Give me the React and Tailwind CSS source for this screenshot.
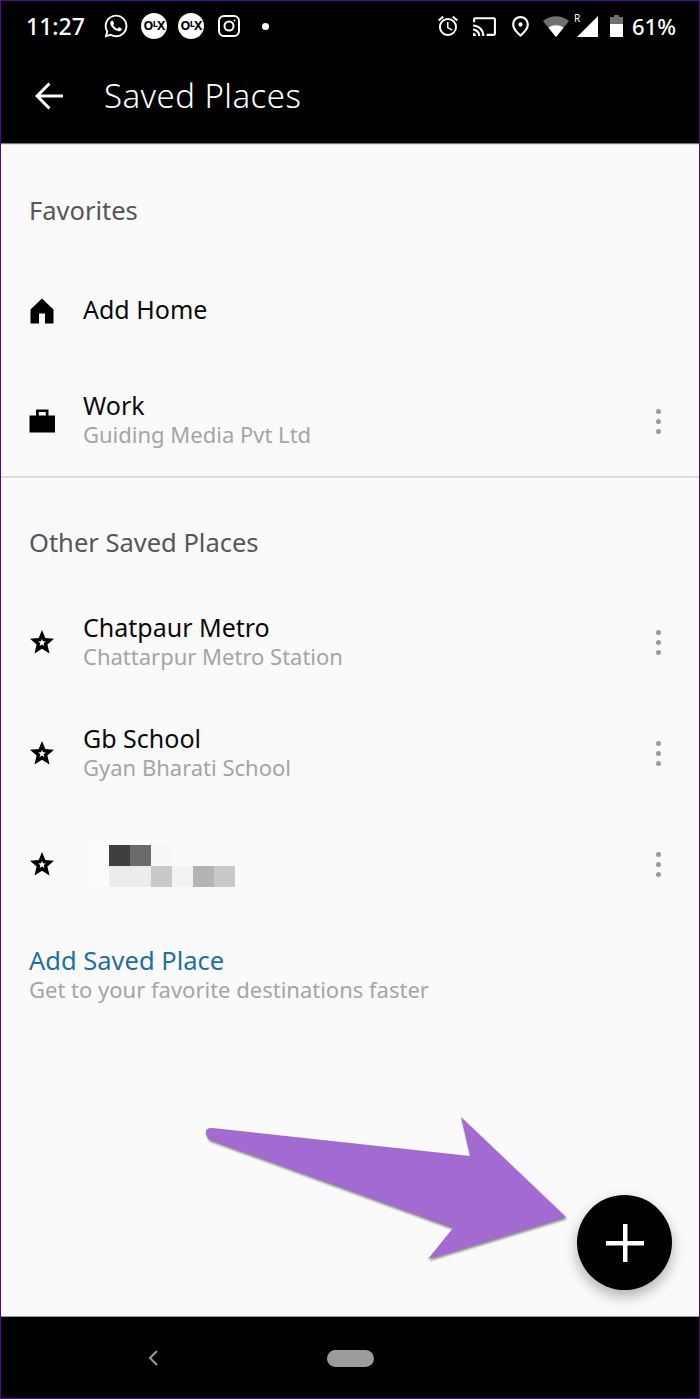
import React from "react";
import { FaWhatsapp } from "react-icons/fa";
import { MdAccessAlarm, MdCast, MdOutlinePlace } from "react-icons/md";

const Olx = ({ className }) => (
  <div className={"w-[26px] h-[26px] rounded-full bg-white flex items-center justify-center text-black text-[12.500px] font-bold leading-none tracking-[-0.8px] " + className}>
    O<span className="text-[9px] -mt-[5px]">L</span>X
  </div>
);

const Home = () => (
  <svg width="24" height="26" viewBox="0 0 24 26" className="block">
    <path fill="#000" fillRule="evenodd" d="M12 .5 23.500 11.500V25.500H15V15.500H9V25.500H.5V11.500Z" />
  </svg>
);

const Briefcase = () => (
  <svg width="26" height="24" viewBox="0 0 26 24" className="block">
    <path fill="#000" fillRule="evenodd" d="M7 .5h12.500v6H26V23.500H.5V6.500H7ZM9.800 3v3.500h7V3Z" />
  </svg>
);

const Star = () => (
  <svg width="24" height="24" viewBox="0 0 24 24" className="block -mt-[2px]">
    <path
      fill="#000"
      fillRule="evenodd"
      d="M12 0 15.300 8 24 8.800 17.400 14.500 19.500 23.500 12 18.800 4.500 23.500 6.600 14.500 0 8.800 8.700 8ZM12 8.800 11 11.300 8.200 11.500 10.300 13.300 9.700 16 12 14.600 14.300 16 13.700 13.300 15.800 11.500 13 11.300Z"
    />
  </svg>
);

const Dots = () => (
  <div className="flex flex-col gap-[5px] mr-[38px]">
    <div className="w-[5px] h-[5px] rounded-full bg-[#9a9a9f]" />
    <div className="w-[5px] h-[5px] rounded-full bg-[#9a9a9f]" />
    <div className="w-[5px] h-[5px] rounded-full bg-[#9a9a9f]" />
  </div>
);

const Row = ({ icon, title, sub, dots, children, height = "h-[111px]" }) => (
  <div className={height + " flex items-center pl-[28px]"}>
    <div className="w-[26px] flex justify-center shrink-0">{icon}</div>
    <div className="ml-[28px] flex-1 min-w-0">
      {children || (
        <div className="-mt-[3px]">
          <div className="text-[25px] leading-[28px] text-[#0a0a0a]">{title}</div>
          {sub && <div className="mt-[1px] text-[22px] leading-[28px] text-[#a4a4a9]">{sub}</div>}
        </div>
      )}
    </div>
    {dots && <Dots />}
  </div>
);

export default function App() {
  return (
    <div
      className="relative w-[700px] h-[1399px] flex flex-col overflow-hidden border border-[#4a0b8c] bg-[#fafafa]"
      style={{ fontFamily: '"Noto Sans", "Open Sans", sans-serif' }}
    >
      <header className="h-[143px] shrink-0 bg-black text-white border-b border-[#777]">
        <div className="h-[50px] flex items-center justify-between pl-[25px] pr-[24px]">
          <div className="flex items-center">
            <span className="text-[23px] font-medium leading-none w-[77px]">11:27</span>
            <FaWhatsapp size={26} className="mr-[12px]" />
            <Olx className="mr-[11px]" />
            <Olx className="mr-[14px]" />
            <svg width="22" height="22" viewBox="0 0 22 22" fill="none" stroke="#fff" strokeWidth="2" className="mr-[22px]">
              <rect x="1" y="1" width="20" height="20" rx="5" />
              <circle cx="11" cy="11" r="4.500" />
              <circle cx="16.500" cy="5.500" r="1" fill="#fff" stroke="none" />
            </svg>
            <div className="w-[7px] h-[7px] rounded-full bg-white" />
          </div>
          <div className="flex items-center">
            <MdAccessAlarm size={24} className="mr-[12px]" />
            <MdCast size={25} className="mr-[11px]" />
            <MdOutlinePlace size={25} className="mr-[10px]" />
            <svg width="26" height="21" viewBox="0 0 26 21" className="mr-[8px]">
              <path fill="#707070" d="M13 21 0 5C7-1.500 19-1.500 26 5Z" />
              <path fill="#fff" d="M13 21 5.500 11.700C9.500 8.500 16.500 8.500 20.500 11.700Z" />
            </svg>
            <div className="relative w-[21px] h-[21px] mr-[12px]">
              <svg width="21" height="21" viewBox="0 0 21 21" className="block">
                <path fill="#fff" d="M0 21 21 0V21Z" />
              </svg>
              <span className="absolute -left-[3px] -top-[3px] text-[10px] leading-none">R</span>
            </div>
            <svg width="13" height="22" viewBox="0 0 13 22" className="mr-[9px]">
              <path fill="#707070" d="M4 0H9V2H13V9H0V2H4Z" />
              <path fill="#fff" d="M0 9H13V22H0Z" />
            </svg>
            <span className="w-[43px] text-[22px] font-medium leading-none whitespace-nowrap">61%</span>
          </div>
        </div>
        <div className="h-[90px] flex items-center pl-[34px]">
          <svg width="28" height="28" viewBox="0 0 28 28" fill="none" stroke="#fff" strokeWidth="3" className="shrink-0">
            <path d="M28 14H2M14.500 1.500 2 14l12.500 12.500" />
          </svg>
          <span className="ml-[41px] -mt-[1px] text-[33px] font-light leading-none tracking-[0.45px]">Saved Places</span>
        </div>
      </header>

      <main className="flex-1 bg-[#fafafa] border-t border-[#e4e4e4]">
        <div className="h-[110px] pl-[28px] pt-[49px] text-[25.500px] leading-[32px] text-[#55555a]">Favorites</div>
        <Row icon={<Home />} title="Add Home" />
        <Row icon={<Briefcase />} title="Work" sub="Guiding Media Pvt Ltd" dots height="h-[110px]" />
        <div className="h-[2px] bg-[#dedede]" />
        <div className="h-[109px] pl-[28px] pt-[48px] text-[25.500px] leading-[32px] text-[#55555a]">Other Saved Places</div>
        <Row icon={<Star />} title="Chatpaur Metro" sub="Chattarpur Metro Station" dots />
        <Row icon={<Star />} title="Gb School" sub="Gyan Bharati School" dots />
        <Row icon={<Star />} dots>
          <div className="flex flex-col ml-[5px] mt-[2px]">
            <div className="flex">
              <div className="w-[21px] h-[21px] bg-[#fbfbfb]" />
              <div className="w-[21px] h-[21px] bg-[#3f3f3f]" />
              <div className="w-[21px] h-[21px] bg-[#6b6b6b]" />
              <div className="w-[21px] h-[21px] bg-[#f7f7f7]" />
            </div>
            <div className="flex">
              <div className="w-[21px] h-[21px] bg-[#fbfbfb]" />
              <div className="w-[42px] h-[21px] bg-[#ecebee]" />
              <div className="w-[21px] h-[21px] bg-[#c9c9c9]" />
              <div className="w-[21px] h-[21px] bg-[#f3f3f3]" />
              <div className="w-[21px] h-[21px] bg-[#b4b4b4]" />
              <div className="w-[21px] h-[21px] bg-[#c9c8cc]" />
            </div>
          </div>
        </Row>
        <div className="pl-[28px] pt-[26px]">
          <div className="text-[25.500px] leading-[29px] text-[#1f6f9f]">Add Saved Place</div>
          <div className="text-[22px] leading-[29px] text-[#a4a4a9]">Get to your favorite destinations faster</div>
        </div>
      </main>

      <nav className="h-[82px] shrink-0 bg-black border-t border-[#999] flex items-center relative">
        <svg width="12" height="18" viewBox="0 0 12 18" fill="none" stroke="#9a9a9a" strokeWidth="2" className="ml-[146px] mt-[1px]">
          <path d="M10 2 3 9l7 7" />
        </svg>
        <div className="ml-[168px] w-[47px] h-[17px] rounded-full bg-[#9b9b9b] mt-[1px]" />
      </nav>

      <svg width="380" height="150" viewBox="0 0 380 150" className="absolute left-[199px] top-[1111px] drop-shadow-[1px_2px_1px_rgba(0,0,0,0.45)]">
        <path
          fill="#a36bd1"
          d="M12 16C7 15.500 5 18 6 22 7 25 8 27 10 28L253 116 228 147 366 105 261 5 270 44Z"
        />
      </svg>

      <div className="absolute left-[576px] top-[1194px] w-[95px] h-[95px] rounded-full bg-black flex items-center justify-center shadow-[0_6px_14px_rgba(0,0,0,0.3)]">
        <svg width="38" height="38" viewBox="0 0 38 38" fill="#fff">
          <path d="M17 0h4.500v17H38v4.500H21.500V38H17V21.500H0V17h17Z" />
        </svg>
      </div>
    </div>
  );
}
